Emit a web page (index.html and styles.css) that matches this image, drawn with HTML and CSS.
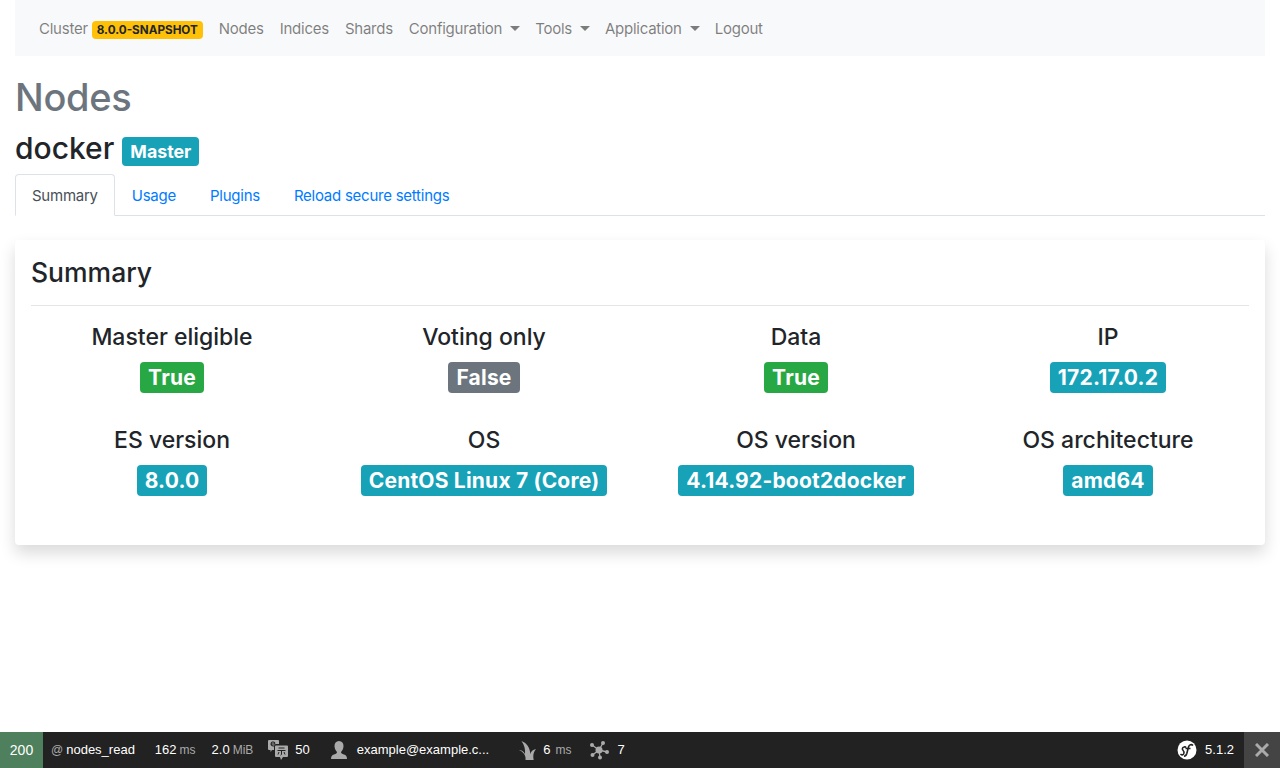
FILE: index.html
```html
<!DOCTYPE html>
<html>

<head>
    <meta name="viewport" content="width=device-width, initial-scale=1.0">
    <link rel="stylesheet" href="styles.css">
    <title>Nodes</title>
</head>

<body>
    <div class="page">
        <nav class="navbar">
            <a class="nav-item">Cluster <span class="badge-version">8.0.0-SNAPSHOT</span></a>
            <a class="nav-item">Nodes</a>
            <a class="nav-item">Indices</a>
            <a class="nav-item">Shards</a>
            <a class="nav-item dropdown">Configuration</a>
            <a class="nav-item dropdown">Tools</a>
            <a class="nav-item dropdown">Application</a>
            <a class="nav-item">Logout</a>
        </nav>

        <h1>Nodes</h1>
        <h3>docker <span class="badge info">Master</span></h3>

        <ul class="tabs">
            <li class="tab active">Summary</li>
            <li class="tab">Usage</li>
            <li class="tab">Plugins</li>
            <li class="tab">Reload secure settings</li>
        </ul>

        <div class="card">
            <h4>Summary</h4>
            <hr>
            <div class="facts">
                <div class="fact"><h5>Master eligible</h5><span class="badge success">True</span></div>
                <div class="fact"><h5>Voting only</h5><span class="badge secondary">False</span></div>
                <div class="fact"><h5>Data</h5><span class="badge success">True</span></div>
                <div class="fact"><h5>IP</h5><span class="badge info">172.17.0.2</span></div>
                <div class="fact"><h5>ES version</h5><span class="badge info">8.0.0</span></div>
                <div class="fact"><h5>OS</h5><span class="badge info">CentOS Linux 7 (Core)</span></div>
                <div class="fact"><h5>OS version</h5><span class="badge info">4.14.92-boot2docker</span></div>
                <div class="fact"><h5>OS architecture</h5><span class="badge info">amd64</span></div>
            </div>
        </div>
    </div>

    <div class="toolbar">
        <div class="tb-status">200</div>
        <div class="tb-block tb-route"><span class="tb-label">@</span> <b>nodes_read</b></div>
        <div class="tb-block tb-time"><b>162</b> <span class="tb-label">ms</span></div>
        <div class="tb-block tb-mem"><b>2.0</b> <span class="tb-label">MiB</span></div>
        <div class="tb-block tb-trans">
            <svg width="20" height="22" viewBox="0 0 20 22">
                <path fill="#aaa" d="M1 1h9a1 1 0 0 1 1 1v3H8a2 2 0 0 0-2 2v4H4l-1.500 2V11H1a1 1 0 0 1-1-1V2a1 1 0 0 1 1-1z"/>
                <path fill="none" stroke="#222" stroke-width="1.100" d="M7 4.500a2 2 0 1 0-1 2.200M3.500 5h3.500"/>
                <path fill="#aaa" d="M8 6.500h11a1 1 0 0 1 1 1V17a1 1 0 0 1-1 1h-4l-2 3-1-3H8a1 1 0 0 1-1-1V7.500a1 1 0 0 1 1-1z"/>
                <path fill="none" stroke="#222" stroke-width="1" d="M10.500 9h6M9.500 11.500h8M13.500 11.500v4l-1 .7M11 13l-1 2.500M16 13l1 2.500"/>
            </svg>
            <b>50</b>
        </div>
        <div class="tb-block tb-user">
            <svg width="24" height="24" viewBox="0 0 24 24">
                <path fill="#aaa" d="M12 3c3 0 4.500 2.200 4.500 5s-1.500 5-2.500 6c0 1.300 1 1.800 3 2.500 2 .7 3 1.500 3 4.500H4c0-3 1-3.800 3-4.500s3-1.200 3-2.500c-1-1-2.500-3.200-2.500-6S9 3 12 3z"/>
            </svg>
            <b>example@example.c...</b>
        </div>
        <div class="tb-block tb-twig">
            <svg width="20" height="24" viewBox="0 0 20 24">
                <path fill="#aaa" d="M1 12c2.500 0 4.500 1.500 6 4 .5-4-.5-9-3.500-13C9 5 12 10 12.300 16c.7-2.500 2.500-4.500 5.700-5-1.500 2-2.500 4-2.700 6.500-.1 1.800.1 3.300.4 4.500H7.500c.4-2.500-.3-4.800-2-6.800C4.300 13.800 2.800 12.700 1 12z"/>
            </svg>
            <b>6</b> <span class="tb-label">ms</span>
        </div>
        <div class="tb-block tb-db">
            <svg width="20" height="20" viewBox="0 0 20 20">
                <path stroke="#aaa" stroke-width="1.300" d="M10 10L3 5M10 10l4-7M10 10l8 2M10 10l1 7.500M10 10l-6.500 5"/>
                <circle fill="#aaa" cx="10" cy="10" r="3.500"/>
                <circle fill="#aaa" cx="3" cy="5" r="2"/>
                <circle fill="#aaa" cx="14" cy="3" r="2"/>
                <circle fill="#aaa" cx="18" cy="12" r="2"/>
                <circle fill="#aaa" cx="11" cy="17.500" r="2"/>
                <circle fill="#aaa" cx="3.500" cy="15" r="2"/>
            </svg>
            <b>7</b>
        </div>
        <div class="tb-right">
            <svg width="20" height="20" viewBox="0 0 20 20">
                <circle fill="#fff" cx="10" cy="10" r="9.500"/>
                <path fill="none" stroke="#222" stroke-width="1.600" d="M3.500 14c1 1.300 2.500 1 3.200-.2.800-1.500.2-2.600-.7-3.500-1-1-.8-3 1-3.300 1-.2 1.800.2 2 .8"/>
                <path fill="none" stroke="#222" stroke-width="1.600" d="M16 5.500c-1.500-1.500-3.800-1-4.500 1.500L9.800 13.500c-.5 1.700-1.300 2.700-2.800 2.700M8.500 8.500h5"/>
            </svg>
            <b>5.1.2</b>
        </div>
        <div class="tb-close">
            <svg width="14" height="14" viewBox="0 0 14 14">
                <path stroke="#aaa" stroke-width="3" d="M1 1l12 12M13 1L1 13"/>
            </svg>
        </div>
    </div>
</body>

</html>
```

FILE: styles.css
```css
html,
body {
    height: 100%;
}

body {
    display: flex;
    flex-direction: column;
    font-family: Inter, "Liberation Sans", sans-serif;
    font-size: 16px;
    line-height: 1.5;
    color: #212529;
    background-color: #fff;
    margin: 0;
}

.page {
    flex: 1;
    padding: 0 15px;
}

.navbar {
    display: flex;
    align-items: center;
    box-sizing: border-box;
    height: 56px;
    padding: 2px 16px 0;
    background-color: #f8f9fa;
    color: rgba(0, 0, 0, 0.5);
}

.nav-item {
    padding: 0 8px;
    font-size: 15px;
    letter-spacing: -0.25px;
    white-space: nowrap;
}

.dropdown {
    padding-right: 7px;
}

.dropdown::after {
    content: "";
    display: inline-block;
    margin-left: 8px;
    vertical-align: 3px;
    border-top: 5px solid;
    border-left: 5px solid transparent;
    border-right: 5px solid transparent;
}

.badge-version {
    display: inline-block;
    padding: 3px 5px;
    font-size: 11.700px;
    font-weight: 700;
    line-height: 12px;
    letter-spacing: 0;
    color: #212529;
    background-color: #ffc107;
    border-radius: 4px;
}

h1 {
    margin: 17px 0 9px;
    font-size: 38px;
    font-weight: 500;
    line-height: 48px;
    letter-spacing: -0.3px;
    color: #6c757d;
}

h3 {
    margin: 0 0 8px;
    font-size: 30px;
    font-weight: 500;
    line-height: 36px;
}

.badge {
    display: inline-block;
    padding: 5px 8px;
    font-size: 21px;
    font-weight: 700;
    line-height: 21px;
    letter-spacing: 0.2px;
    color: #fff;
    border-radius: 4px;
}

h3 .badge {
    padding: 4px 8px;
    font-size: 17.800px;
    letter-spacing: 0;
    vertical-align: 1px;
}

.info {
    background-color: #17a2b8;
}

.success {
    background-color: #28a745;
}

.secondary {
    background-color: #6c757d;
}

.tabs {
    display: flex;
    margin: 0 0 24px;
    padding: 0;
    list-style: none;
    border-bottom: 1px solid #dee2e6;
}

.tab {
    margin-bottom: -1px;
    padding: 9px 16px 7px;
    font-size: 15px;
    letter-spacing: -0.25px;
    line-height: 24px;
    color: #007bff;
    border: 1px solid transparent;
    border-radius: 4px 4px 0 0;
}

.tab.active {
    color: #495057;
    background-color: #fff;
    border-color: #dee2e6 #dee2e6 #fff;
}

.card {
    padding: 16px 16px 49px;
    background-color: #fff;
    border-radius: 4px;
    box-shadow: 0 8px 16px rgba(0, 0, 0, 0.15);
}

h4 {
    margin: -1px 0 0;
    font-size: 26.500px;
    font-weight: 500;
    line-height: 35px;
}

hr {
    margin: 15px 0 16px;
    border: 0;
    border-top: 1px solid rgba(0, 0, 0, 0.1);
}

.facts {
    display: grid;
    grid-template-columns: repeat(4, 1fr);
    margin: 0 -15px;
    row-gap: 32px;
    text-align: center;
}

.fact h5 {
    margin: 0 0 10px;
    font-size: 23px;
    font-weight: 500;
    line-height: 30px;
}

.toolbar {
    display: flex;
    flex: none;
    align-items: center;
    height: 36px;
    font-family: "Liberation Sans", Arial, sans-serif;
    font-size: 12px;
    color: #fff;
    background-color: #222;
}

.toolbar b {
    font-weight: 400;
    font-size: 13px;
}

.toolbar svg {
    display: block;
}

.tb-label {
    color: #aaa;
    font-size: 12px;
}

.tb-status {
    width: 43px;
    line-height: 36px;
    text-align: center;
    font-size: 14px;
    background-color: #4f805d;
}

.tb-block {
    display: flex;
    align-items: center;
    gap: 3px;
    white-space: nowrap;
}

.tb-route {
    margin-left: 8px;
}

.tb-time {
    margin-left: 20px;
}

.tb-mem {
    margin-left: 16px;
}

.tb-trans {
    margin-left: 15px;
    gap: 7px;
}

.tb-user {
    margin-left: 17px;
    gap: 6px;
}

.tb-twig {
    margin-left: 29px;
    gap: 5px;
}

.tb-db {
    margin-left: 18px;
    gap: 8px;
}

.tb-right {
    display: flex;
    align-items: center;
    gap: 8px;
    margin-left: auto;
    margin-right: 10px;
}

.tb-close {
    display: flex;
    align-items: center;
    justify-content: center;
    width: 36px;
    height: 36px;
    background-color: #444;
}
```
